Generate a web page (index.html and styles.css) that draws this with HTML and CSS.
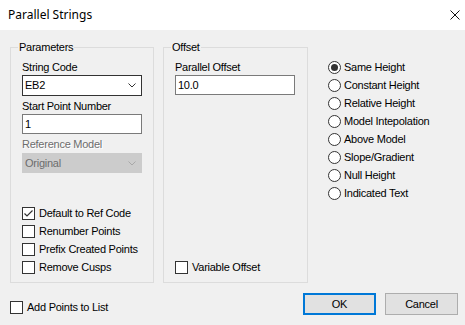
FILE: index.html
```html
<!DOCTYPE html>
<html lang="en">
<head>
  <meta charset="UTF-8">
  <title>Parallel Strings</title>
  <link rel="stylesheet" href="styles.css">
</head>
<body>

  <div class="titlebar">
    <span class="title">Parallel Strings</span>
    <svg class="close" width="10" height="10" viewBox="0 0 10 10">
      <path d="M0.5 0.5 L9.5 9.5 M9.5 0.5 L0.5 9.5" stroke="#111" stroke-width="1" fill="none"/>
    </svg>
  </div>

  <div class="content">
    <div class="panels">

      <div class="group params">
        <div class="group-title">Parameters</div>
        <div class="label first">String Code</div>
        <div class="select">
          <span>EB2</span>
          <svg class="chevron" width="8" height="5" viewBox="0 0 8 5">
            <path d="M0.5 0.5 L4 4 L7.5 0.5" stroke="#333" stroke-width="1" fill="none"/>
          </svg>
        </div>
        <div class="label">Start Point Number</div>
        <div class="input">1</div>
        <div class="label disabled">Reference Model</div>
        <div class="select is-disabled">
          <span>Original</span>
          <svg class="chevron" width="8" height="5" viewBox="0 0 8 5">
            <path d="M0.5 0.5 L4 4 L7.5 0.5" stroke="#a8a8a8" stroke-width="1" fill="none"/>
          </svg>
        </div>

        <div class="checks">
          <div class="check">
            <span class="box">
              <svg width="11" height="11" viewBox="0 0 11 11">
                <path d="M1.5 5.5 L4 8 L9.5 2.5" stroke="#333" stroke-width="1.2" fill="none"/>
              </svg>
            </span>
            Default to Ref Code
          </div>
          <div class="check"><span class="box"></span>Renumber Points</div>
          <div class="check"><span class="box"></span>Prefix Created Points</div>
          <div class="check"><span class="box"></span>Remove Cusps</div>
        </div>
      </div>

      <div class="group offset">
        <div class="group-title">Offset</div>
        <div class="label first">Parallel Offset</div>
        <div class="input">10.0</div>
        <div class="checks">
          <div class="check"><span class="box"></span>Variable Offset</div>
        </div>
      </div>

      <div class="modes">
        <div class="radio"><span class="dot selected"></span>Same Height</div>
        <div class="radio"><span class="dot"></span>Constant Height</div>
        <div class="radio"><span class="dot"></span>Relative Height</div>
        <div class="radio"><span class="dot"></span>Model Intepolation</div>
        <div class="radio"><span class="dot"></span>Above Model</div>
        <div class="radio"><span class="dot"></span>Slope/Gradient</div>
        <div class="radio"><span class="dot"></span>Null Height</div>
        <div class="radio"><span class="dot"></span>Indicated Text</div>
      </div>

    </div>

    <div class="footer">
      <div class="check add-points"><span class="box"></span>Add Points to List</div>
      <div class="buttons">
        <button class="btn default">OK</button>
        <button class="btn">Cancel</button>
      </div>
    </div>
  </div>

</body>
</html>
```

FILE: styles.css
```css
:root {
  --dialog-bg: #F0F0F0;
  --group-line: #DCDCDC;
  --text-color: #000;
  --disabled-text: #6D6D6D;
  --accent: #0078D7;
}

body {
  margin: 0;
  width: 465px;
  height: 325px;
  overflow: hidden;
  background-color: var(--dialog-bg);
  color: var(--text-color);
  font-family: 'Liberation Sans', Arial, sans-serif;
  font-size: 11px;
  letter-spacing: -0.25px;
  line-height: 13px;
}

.titlebar {
  height: 30px;
  background-color: #fff;
  display: flex;
  align-items: center;
  justify-content: space-between;
  padding: 0 5px 0 8px;
}

.title {
  font-family: 'Noto Sans', 'Open Sans', sans-serif;
  font-size: 12px;
  letter-spacing: 0;
  color: #000;
  margin-top: -1px;
}

.close {
  margin-right: 0;
  margin-top: -1px;
}

.content {
  padding: 0 7px 0 10px;
}

.panels {
  display: flex;
  margin-top: 17px;
}

.group {
  border: 1px solid var(--group-line);
  height: 236px;
  box-sizing: border-box;
  padding: 0 11px 6px 11px;
  display: flex;
  flex-direction: column;
  align-items: flex-start;
}

.params {
  width: 144px;
}

.offset {
  width: 145px;
  margin-left: 9px;
}

.group-title {
  margin: -7px 0 0 -4px;
  padding: 0 1px;
  background-color: var(--dialog-bg);
}

.label {
  margin-top: 4px;
}

.label.first {
  margin-top: 7px;
}

.label.disabled {
  color: var(--disabled-text);
  text-shadow: 1px 1px 0 #fff;
}

.select, .input {
  width: 120px;
  box-sizing: border-box;
  background-color: #fff;
  display: flex;
  align-items: center;
  justify-content: space-between;
  padding: 0 5px 0 2px;
}

.select {
  height: 21px;
  border: 1px solid #333;
  margin-top: 1px;
}

.select.is-disabled {
  height: 20px;
  margin-top: 2px;
  background-color: #CCCCCC;
  border-color: #CCCCCC;
  color: var(--disabled-text);
}

.input {
  height: 20px;
  border: 1px solid #7A7A7A;
  margin-top: 1px;
}

.checks {
  margin-top: auto;
}

.check, .radio {
  display: flex;
  align-items: center;
  height: 18px;
}

.box {
  width: 13px;
  height: 13px;
  box-sizing: border-box;
  border: 1px solid #333;
  background-color: #fff;
  margin-right: 4px;
  display: flex;
  align-items: center;
  justify-content: center;
}

.modes {
  margin: 11px 0 0 20px;
}

.dot {
  width: 13px;
  height: 13px;
  box-sizing: border-box;
  border: 1px solid #333;
  border-radius: 50%;
  background-color: #fff;
  margin-right: 3px;
  display: flex;
  align-items: center;
  justify-content: center;
}

.dot.selected::after {
  content: "";
  width: 7px;
  height: 7px;
  border-radius: 50%;
  background-color: #333;
}

.footer {
  display: flex;
  justify-content: space-between;
  margin-top: 10px;
}

.add-points {
  margin-top: 5px;
}

.buttons {
  display: flex;
  gap: 9px;
}

.btn {
  width: 73px;
  height: 22px;
  box-sizing: border-box;
  background-color: #E1E1E1;
  border: 1px solid #ADADAD;
  font-family: inherit;
  font-size: 11px;
  letter-spacing: -0.25px;
  color: var(--text-color);
  padding: 0;
}

.btn.default {
  border: 2px solid var(--accent);
}
```
